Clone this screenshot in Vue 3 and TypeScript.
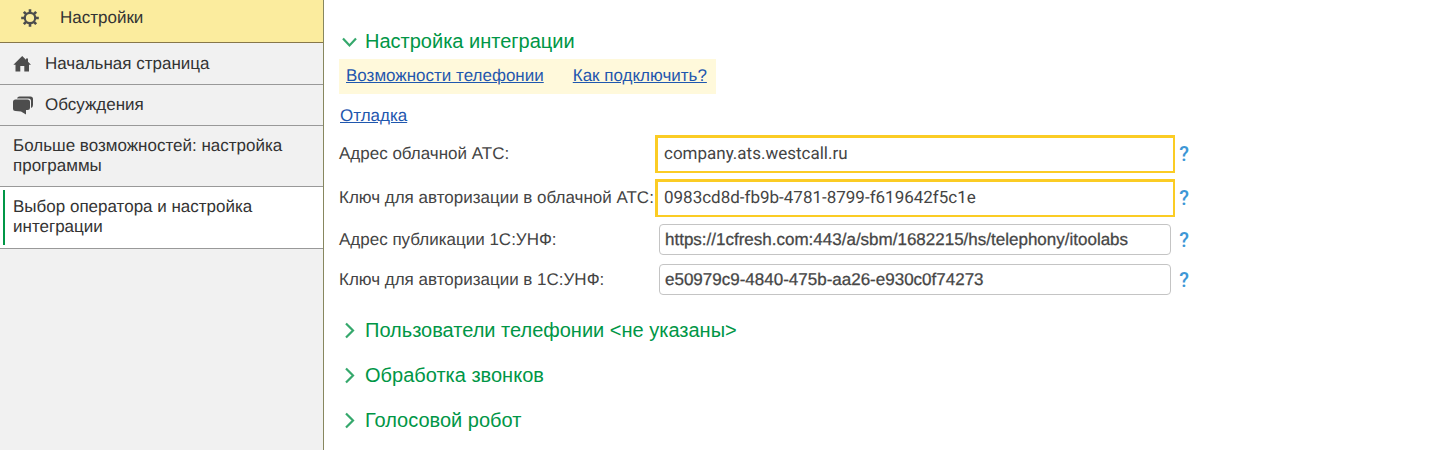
<script setup lang="ts">
import { ref } from 'vue'

interface Field {
  id: string
  label: string
  value: string
}

const cloudFields = ref<Field[]>([
  { id: 'cloud-address', label: 'Адрес облачной АТС:', value: 'company.ats.westcall.ru' },
  { id: 'cloud-key', label: 'Ключ для авторизации в облачной АТС:', value: '0983cd8d-fb9b-4781-8799-f619642f5c1e' },
])

const appFields = ref<Field[]>([
  { id: 'app-address', label: 'Адрес публикации 1С:УНФ:', value: 'https://1cfresh.com:443/a/sbm/1682215/hs/telephony/itoolabs' },
  { id: 'app-key', label: 'Ключ для авторизации в 1С:УНФ:', value: 'e50979c9-4840-475b-aa26-e930c0f74273' },
])

const sections = ['Пользователи телефонии <не указаны>', 'Обработка звонков', 'Голосовой робот']
</script>

<template>
  <div class="page">
    <nav class="sidebar">
      <a href="#settings" class="item settings">
        <svg class="gear" width="18" height="18" viewBox="0 0 18 18" aria-hidden="true">
          <circle cx="9" cy="9" r="5.200" fill="none" stroke="#4d4d4d" stroke-width="2.2" />
          <g stroke="#4d4d4d" stroke-width="2.6">
            <path d="M9 .2v3.2M9 14.6v3.2M.2 9h3.2M14.6 9h3.2M2.8 2.8l2.2 2.2M13 13l2.2 2.2M2.8 15.2L5 13M13 5l2.2-2.2" />
          </g>
        </svg>
        <span>Настройки</span>
      </a>
      <a href="#home" class="item home">
        <svg class="icon" width="20" height="18" viewBox="0 0 20 18" aria-hidden="true">
          <path d="M9.200 1L13 4.700V3.500H15V6.700L18 9.800H16V16.500H11.300V11H7.300V16.500H2.500V9.800H.4z" fill="#4d4d4d" />
        </svg>
        <span>Начальная страница</span>
      </a>
      <a href="#talks" class="item">
        <svg class="icon" width="20" height="19" viewBox="0 0 20 19" aria-hidden="true">
          <path d="M4 2.500Q4.500 .5 6.500 .5H17.500Q20 .5 20 3V9Q20 11.500 18 12V5Q18 2.500 15.500 2.500z" fill="#4d4d4d" />
          <path d="M2.500 3.500H14.500Q17 3.500 17 6V11.500Q17 14 14.500 14H13V18.500L8 15.500 2.500 15Q0 15 0 12.500V6Q0 3.500 2.500 3.500z" fill="#4d4d4d" />
        </svg>
        <span>Обсуждения</span>
      </a>
      <a href="#more" class="item wide">Больше возможностей: настройка программы</a>
      <a href="#operator" class="item wide current">Выбор оператора и настройка интеграции</a>
    </nav>

    <main class="content">
      <h2 class="heading">
        <button type="button" class="toggle" aria-expanded="true">
          <svg width="20" height="20" viewBox="0 0 20 20" aria-hidden="true">
            <path d="M4 7.500l6.500 7L17 7.500" fill="none" stroke="#35a86c" stroke-width="2.2" />
          </svg>
          <span>Настройка интеграции</span>
        </button>
      </h2>

      <div class="links">
        <a href="#features">Возможности телефонии</a>
        <a href="#connect">Как подключить?</a>
      </div>
      <a href="#debug" class="debug">Отладка</a>

      <form class="form" @submit.prevent>
        <div class="group cloud">
          <div v-for="field in cloudFields" :key="field.id" class="row">
            <label :for="field.id">{{ field.label }}</label>
            <input :id="field.id" v-model="field.value" type="text" />
            <button type="button" class="help" :aria-label="'Справка: ' + field.label">?</button>
          </div>
        </div>
        <div class="group app">
          <div v-for="field in appFields" :key="field.id" class="row">
            <label :for="field.id">{{ field.label }}</label>
            <input :id="field.id" v-model="field.value" type="text" />
            <button type="button" class="help" :aria-label="'Справка: ' + field.label">?</button>
          </div>
        </div>
      </form>

      <div class="sections">
        <h2 v-for="title in sections" :key="title" class="heading">
          <button type="button" class="toggle" aria-expanded="false">
            <svg width="20" height="20" viewBox="0 0 20 20" aria-hidden="true">
              <path d="M7 3.500l7 7-7 7" fill="none" stroke="#35a86c" stroke-width="2.2" />
            </svg>
            <span>{{ title }}</span>
          </button>
        </h2>
      </div>
    </main>
  </div>
</template>

<style>
body {
  background: #fff;
}
</style>

<style scoped>
.page {
  display: flex;
  min-height: 100vh;
  font-family: "Liberation Sans", Arial, sans-serif;
  font-size: 17px;
  line-height: 20px;
  color: #333;
  text-rendering: geometricPrecision;
}

.sidebar {
  flex: 0 0 323px;
  background: #f1f1f1;
  border-right: 1px solid #87875f;
}

.item {
  display: flex;
  align-items: center;
  box-sizing: border-box;
  min-height: 41px;
  padding: 0 12px 0 13px;
  border-bottom: 1px solid #999;
  color: #333;
  text-decoration: none;
}

.item.settings {
  min-height: 43px;
  padding: 0 21px 7px;
  background: #fbec9e;
  border-bottom-color: #87774a;
}

.item.home {
  min-height: 42px;
}

.gear {
  margin-right: 21px;
}

.icon {
  margin-right: 12px;
}

.item.wide {
  padding: 10px 40px 10px 13px;
}

.item.current {
  padding: 10px 40px 11px 8px;
  background: #fff;
}

.item.current::before {
  content: "";
  flex: 0 0 2px;
  align-self: stretch;
  margin: -7px 8px -8px -5px;
  background: #009646;
}

.content {
  flex: 1;
  min-width: 0;
  padding: 29px 15px 0;
}

.heading {
  margin: 0;
  font-size: 20px;
  font-weight: 400;
  line-height: 24px;
}

.toggle {
  display: flex;
  align-items: center;
  gap: 6px;
  padding: 0;
  border: 0;
  background: none;
  color: #009646;
  font: inherit;
  text-align: left;
  cursor: pointer;
}

.links {
  display: flex;
  gap: 29px;
  box-sizing: border-box;
  width: 377px;
  max-width: 100%;
  margin-top: 6px;
  padding: 7px 7px 8px;
  background: #fff9db;
}

.links a,
.debug {
  color: #1f57ae;
}

.debug {
  display: inline-block;
  margin: 12px 0 0 1px;
}

.form {
  max-width: 854px;
  margin-top: 9px;
  color: #444;
}

.group {
  display: grid;
}

.row {
  display: flex;
  align-items: center;
}

.row label {
  flex: 0 0 316px;
  white-space: nowrap;
}

.row input {
  flex: 1;
  box-sizing: border-box;
  min-width: 0;
  margin: 0;
  background: #fff;
  color: #444;
  text-rendering: inherit;
}

.cloud {
  gap: 6px;
}

.cloud input {
  height: 38px;
  padding: 0 6px 2px;
  border: solid #fbcc24;
  border-width: 3px 2px 2px 3px;
  font: 17px Roboto, sans-serif;
}

.app {
  gap: 9px;
  margin-top: 7px;
}

.app input {
  height: 31px;
  margin: 0 4px;
  padding: 0 5px;
  border: 1px solid #c4c4c4;
  border-radius: 4px;
  font: 17px "Liberation Sans", Arial, sans-serif;
  -webkit-text-stroke: 0.3px #505050;
}

.help {
  flex: 0 0 18px;
  padding: 0;
  border: 0;
  background: none;
  color: #3d97d6;
  font: 500 20px/20px Roboto, sans-serif;
  text-align: center;
  cursor: pointer;
}

.sections {
  display: grid;
  gap: 21px;
  margin-top: 23px;
}
</style>
